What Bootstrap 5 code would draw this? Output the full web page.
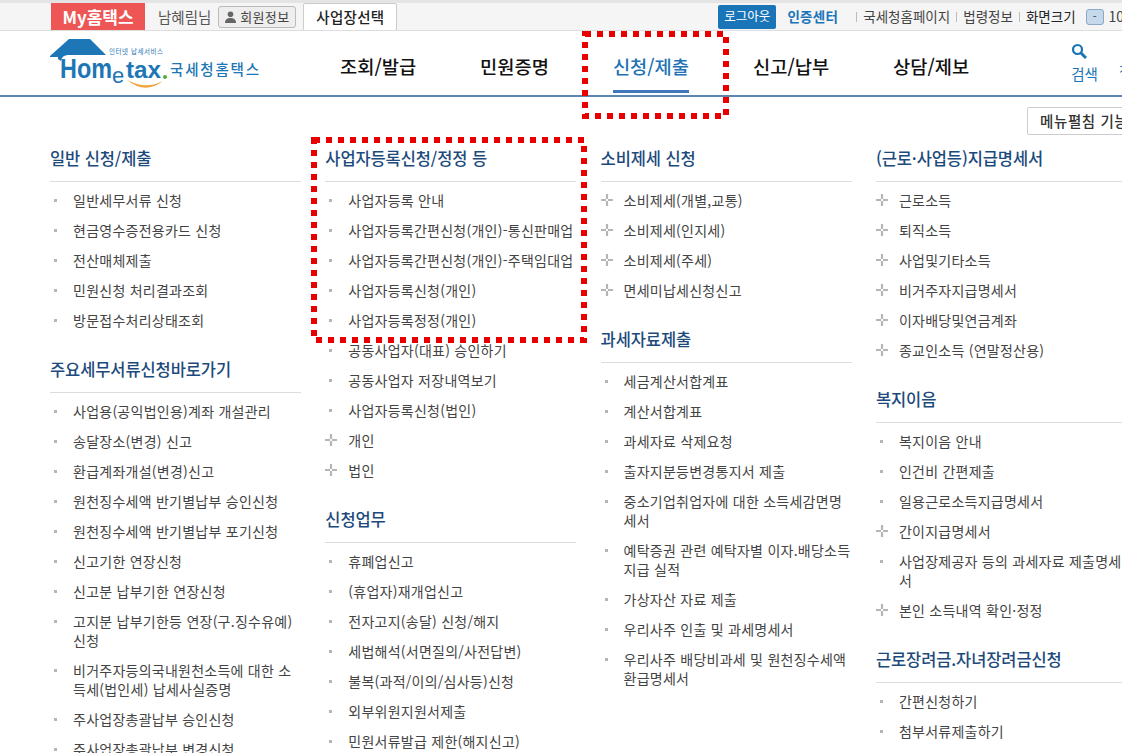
<!DOCTYPE html>
<html lang="ko">
<head>
    <meta charset="UTF-8">
    <meta name="viewport" content="width=device-width, initial-scale=1.0">
    <title>Hometax</title>
    <link href="https://cdn.jsdelivr.net/npm/bootstrap@5.3.0/dist/css/bootstrap.min.css" rel="stylesheet">
    <style>
        html, body { height: 753px; overflow: hidden; }
        body {
            position: relative;
            font-family: "Noto Sans CJK KR", "Noto Sans", sans-serif;
            color: #444;
            background: #fff;
        }

        /* top bar */
        .top-bar {
            height: 31px;
            background: #f5f5f5;
            border-top: 3px solid #e4e4e4;
            border-bottom: 1px solid #ddd;
            padding-left: 51px;
            font-size: 13px;
            white-space: nowrap;
            overflow: hidden;
        }
        .my-tab {
            width: 94px; height: 27px; flex: none;
            background: #ee5555;
            color: #fff;
            font-size: 17px;
            font-weight: 700;
        }
        .user-name { margin-left: 13px; color: #555; font-size: 14.5px; }
        .member-btn {
            margin-left: 7px; height: 22px; width: 78px; flex: none;
            border: 1px solid #bbb; border-radius: 3px;
            background: #eee; color: #444; font-size: 13px; letter-spacing: .4px;
        }
        .biz-btn {
            margin-left: 7px; height: 28px; width: 94px; flex: none;
            background: #fff; border: 1px solid #ccc; border-radius: 2px;
            color: #222; font-size: 14.5px; font-weight: 500; letter-spacing: .3px;
        }
        .logout-btn {
            margin-left: 321px; height: 24px; width: 58px; flex: none;
            background: #1a74b8; color: #fff; border-radius: 2px; font-size: 12.5px;
        }
        .cert-link { margin-left: 11px; color: #1a74b8; font-weight: 700; font-size: 13.5px; letter-spacing: .3px; }
        .util-link { color: #444; font-size: 13.5px; margin-left: 6px; }
        .util-link.first { margin-left: 18px; }
        .util-link::before { content: ""; display: inline-block; width: 1px; height: 10px; background: #bbb; margin-right: 6px; }
        .zoom-minus {
            margin-left: 10px; width: 18px; height: 16px; flex: none;
            border: 1px solid #8aa9c8; border-radius: 3px;
            background: #c5d8ec; color: #345; font-size: 11px; line-height: 13px; text-align: center;
        }
        .zoom-val { margin-left: 5px; font-size: 14px; }

        /* main nav */
        .main-nav {
            height: 66px;
            border-bottom: 2px solid #5b86b0;
            padding-left: 50px;
            white-space: nowrap;
            overflow: hidden;
        }
        .logo-box { width: 212px; flex: none; }
        .nav-item-txt {
            position: relative;
            height: 64px;
            display: flex; align-items: center;
            color: #111; font-size: 18.7px; font-weight: 500;
            padding-top: 7px;
            margin-left: 64px;
        }
        .nav-item-txt.first { margin-left: 78px; }
        .nav-item-txt.on { color: #2272b5; }
        .nav-item-txt.on::after {
            content: ""; position: absolute; left: 0; right: 0; bottom: 2px;
            height: 3px; background: #3f77bb;
        }
        .search-box { margin-left: 102px; color: #1a74b8; font-size: 14.5px; line-height: 1; padding-top: 12px; flex: none; }
        .next-box { margin-left: 21px; color: #1a74b8; font-size: 14.5px; line-height: 1; padding-top: 33px; flex: none; }

        .fold-row { height: 49px; padding-left: 1027px; padding-top: 10px; white-space: nowrap; }
        .fold-btn {
            width: 120px; height: 28px;
            border: 1px solid #ccc; border-radius: 2px; background: #fff;
            color: #333; font-size: 14.5px; font-weight: 500; letter-spacing: .6px;
            padding-left: 12px; line-height: 25px;
        }

        /* menu columns */
        .menu-wrap { width: 1200px; padding-left: 50px; gap: 24.3px; }
        .menu-col { width: 251px; flex: none; }
        .menu-title {
            margin: 0; height: 36px;
            border-bottom: 1px solid #dcdcdc;
            color: #1d4a7c; font-size: 16.5px; font-weight: 500; line-height: 24px;
            letter-spacing: -.1px;
            white-space: nowrap;
        }
        .menu-list { list-style: none; margin: 0 0 22px; padding: 3px 0 0; }
        .menu-list li {
            position: relative;
            padding: 6px 0 5px 23px;
            font-size: 14px; line-height: 19px; color: #444;
            letter-spacing: .25px;
        }
        .menu-list li::before {
            content: ""; position: absolute; left: 4px; top: 14px;
            width: 3px; height: 3px; background: #b5b5b5;
        }
        .menu-list li.plus::before { display: none; }
        .plus-ico { position: absolute; left: 0; top: 9px; width: 12px; height: 12px; }

        .red-mark { position: absolute; pointer-events: none; }
    </style>
</head>
<body>
    <div class="top-bar d-flex align-items-center">
        <div class="my-tab d-flex align-items-center justify-content-center">My홈택스</div>
        <span class="user-name">남혜림님</span>
        <div class="member-btn d-flex align-items-center justify-content-center gap-1">
            <svg width="11" height="12" viewBox="0 0 11 12"><circle cx="5.5" cy="3.2" r="2.8" fill="#666"/><path d="M0 12c0-3.5 2-5 5.500-5s5.500 1.500 5.500 5z" fill="#666"/></svg>
            <span>회원정보</span>
        </div>
        <div class="biz-btn d-flex align-items-center justify-content-center">사업장선택</div>
        <div class="logout-btn d-flex align-items-center justify-content-center">로그아웃</div>
        <span class="cert-link">인증센터</span>
        <span class="util-link first">국세청홈페이지</span>
        <span class="util-link">법령정보</span>
        <span class="util-link text-dark">화면크기</span>
        <div class="zoom-minus">-</div>
        <span class="zoom-val">100</span>
    </div>

    <div class="main-nav d-flex">
        <div class="logo-box">
            <svg width="212" height="64" viewBox="0 0 212 64">
                <path d="M0 25 L19 8 L40 8 L56 24 L18 24 Q12 24 11 30 L8 28 L8 26 L0 26 Z" fill="#1d76b5"/>
                <text x="59" y="23" font-size="6.500" fill="#1d76b5" font-family="Noto Sans CJK KR" textLength="54">인터넷 납세서비스</text>
                <text x="10" y="47" font-size="28" font-weight="700" fill="#1d76b5" font-family="Liberation Sans" textLength="52" lengthAdjust="spacingAndGlyphs">Hom</text>
                <text x="62" y="52" font-size="22" fill="#1d76b5" font-family="Liberation Sans">e</text>
                <text x="76" y="47" font-size="24" font-weight="700" fill="#1d76b5" font-family="Liberation Sans" textLength="35" lengthAdjust="spacingAndGlyphs">tax</text>
                <circle cx="115" cy="46" r="2" fill="#4fae3a"/>
                <path d="M77 49 Q95 64 113 50 Q96 59 77 49Z" fill="#f0a63a"/>
                <text x="120" y="44" font-size="14.500" font-weight="500" fill="#1d76b5" font-family="Noto Sans CJK KR" textLength="89">국세청홈택스</text>
            </svg>
        </div>
        <div class="nav-item-txt first">조회/발급</div>
        <div class="nav-item-txt">민원증명</div>
        <div class="nav-item-txt on">신청/제출</div>
        <div class="nav-item-txt">신고/납부</div>
        <div class="nav-item-txt">상담/제보</div>
        <div class="search-box">
            <svg class="d-block" width="16" height="16" viewBox="0 0 16 16" fill="none" stroke="#1a74b8"><circle cx="6.500" cy="6.500" r="4.500" stroke-width="2.200"/><path d="M10 10 L15 15" stroke-width="3"/></svg>
            <div class="search-label mt-2">검색</div>
        </div>
        <div class="next-box">전체</div>
    </div>

    <div class="fold-row"><div class="fold-btn">메뉴펼침 기능</div></div>

    <div class="menu-wrap d-flex" id="menu"></div>

    <svg class="red-mark" style="left:582px;top:31px" width="147" height="88"><rect x="3" y="3" width="141" height="82" fill="none" stroke="#e80000" stroke-width="6" stroke-dasharray="6 6"/></svg>
    <svg class="red-mark" style="left:311px;top:137px" width="276" height="206"><rect x="3" y="3" width="270" height="200" fill="none" stroke="#e80000" stroke-width="6" stroke-dasharray="6 6"/></svg>

    <script>
        // [제목, [항목...]] 묶음, '+' 로 시작하면 십자 아이콘
        const cols = [
            [["일반 신청/제출", ["일반세무서류 신청","현금영수증전용카드 신청","전산매체제출","민원신청 처리결과조회","방문접수처리상태조회"]],
             ["주요세무서류신청바로가기", ["사업용(공익법인용)계좌 개설관리","송달장소(변경) 신고","환급계좌개설(변경)신고","원천징수세액 반기별납부 승인신청","원천징수세액 반기별납부 포기신청","신고기한 연장신청","신고분 납부기한 연장신청","고지분 납부기한등 연장(구.징수유예) 신청","비거주자등의국내원천소득에 대한 소득세(법인세) 납세사실증명","주사업장총괄납부 승인신청","주사업장총괄납부 변경신청"]]],
            [["사업자등록신청/정정 등", ["사업자등록 안내","사업자등록간편신청(개인)-통신판매업","사업자등록간편신청(개인)-주택임대업","사업자등록신청(개인)","사업자등록정정(개인)","공동사업자(대표) 승인하기","공동사업자 저장내역보기","사업자등록신청(법인)","+개인","+법인"]],
             ["신청업무", ["휴폐업신고","(휴업자)재개업신고","전자고지(송달) 신청/해지","세법해석(서면질의/사전답변)","불복(과적/이의/심사등)신청","외부위원지원서제출","민원서류발급 제한(해지신고)"]]],
            [["소비제세 신청", ["+소비제세(개별,교통)","+소비제세(인지세)","+소비제세(주세)","+면세미납세신청신고"]],
             ["과세자료제출", ["세금계산서합계표","계산서합계표","과세자료 삭제요청","출자지분등변경통지서 제출","중소기업취업자에 대한 소득세감면명세서","예탁증권 관련 예탁자별 이자.배당소득 지급 실적","가상자산 자료 제출","우리사주 인출 및 과세명세서","우리사주 배당비과세 및 원천징수세액 환급명세서"]]],
            [["(근로·사업등)지급명세서", ["+근로소득","+퇴직소득","+사업및기타소득","+비거주자지급명세서","+이자배당및연금계좌","+종교인소득 (연말정산용)"]],
             ["복지이음", ["복지이음 안내","인건비 간편제출","일용근로소득지급명세서","+간이지급명세서","사업장제공자 등의 과세자료 제출명세서","+본인 소득내역 확인·정정"]],
             ["근로장려금.자녀장려금신청", ["간편신청하기","첨부서류제출하기"]]]
        ];
        const plusSvg = '<svg class="plus-ico" viewBox="0 0 12 12"><path d="M6 0v5M6 7v5M0 6h5M7 6h5" stroke="#b5b5b5" stroke-width="2.200"/></svg>';
        const menu = document.getElementById("menu");
        cols.forEach(col => {
            let html = '<div class="menu-col">';
            col.forEach(([title, items]) => {
                html += `<h3 class="menu-title">${title}</h3><ul class="menu-list">`;
                items.forEach(t => {
                    if (t[0] === "+") html += `<li class="plus">${plusSvg}${t.slice(1)}</li>`;
                    else html += `<li>${t}</li>`;
                });
                html += "</ul>";
            });
            menu.innerHTML += html + "</div>";
        });
    </script>
    <script src="https://cdn.jsdelivr.net/npm/bootstrap@5.3.0/dist/js/bootstrap.bundle.min.js"></script>
</body>
</html>
